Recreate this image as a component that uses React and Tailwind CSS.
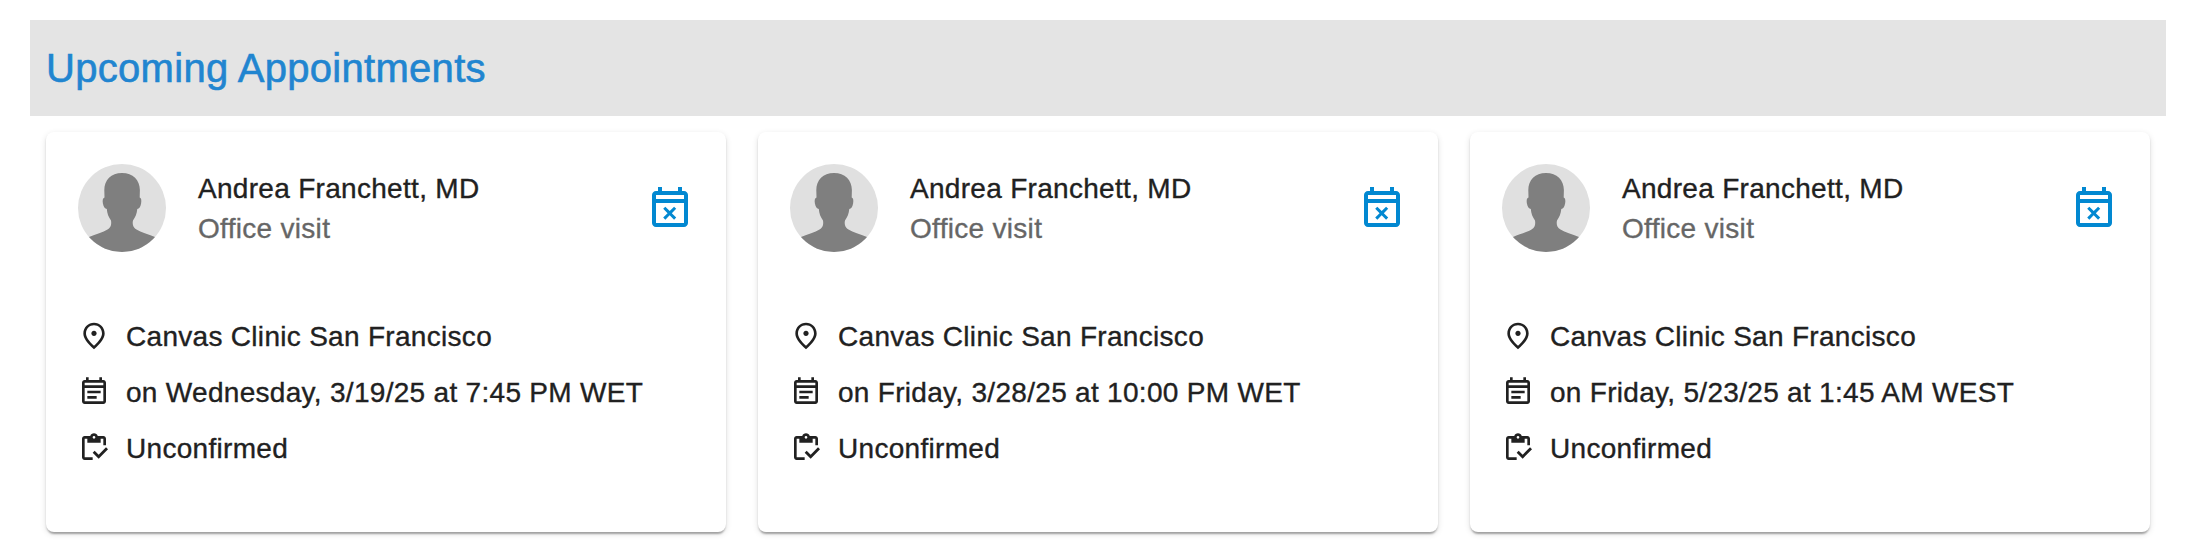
const appointments = [
  { provider: 'Andrea Franchett, MD', type: 'Office visit', place: 'Canvas Clinic San Francisco', time: 'on Wednesday, 3/19/25 at 7:45 PM WET', status: 'Unconfirmed' },
  { provider: 'Andrea Franchett, MD', type: 'Office visit', place: 'Canvas Clinic San Francisco', time: 'on Friday, 3/28/25 at 10:00 PM WET', status: 'Unconfirmed' },
  { provider: 'Andrea Franchett, MD', type: 'Office visit', place: 'Canvas Clinic San Francisco', time: 'on Friday, 5/23/25 at 1:45 AM WEST', status: 'Unconfirmed' },
];

function Icon({ className, children }) {
  return (
    <svg viewBox="0 0 24 24" fill="currentColor" className={className} aria-hidden="true">
      {children}
    </svg>
  );
}

const PlaceIcon = () => (
  <Icon className="size-8 shrink-0">
    <path d="M12 12c-1.1 0-2-.9-2-2s.9-2 2-2 2 .9 2 2-.9 2-2 2zm6-1.8C18 6.57 15.35 4 12 4s-6 2.57-6 6.2c0 2.34 1.95 5.44 6 9.14 4.05-3.7 6-6.8 6-9.14zM12 2c4.2 0 8 3.22 8 8.2 0 3.32-2.67 7.25-8 11.8-5.33-4.55-8-8.48-8-11.8C4 5.22 7.8 2 12 2z" />
  </Icon>
);

const EventNoteIcon = () => (
  <Icon className="size-8 shrink-0">
    <path d="M19 3h-1V1h-2v2H8V1H6v2H5c-1.1 0-2 .9-2 2v14c0 1.1.9 2 2 2h14c1.1 0 2-.9 2-2V5c0-1.1-.9-2-2-2zm0 16H5V9h14v10zM5 7V5h14v2H5zm2 4h10v2H7v-2zm0 4h7v2H7v-2z" />
  </Icon>
);

const InventoryIcon = () => (
  <Icon className="size-8 shrink-0">
    <path d="M5 5h2v3h10V5h2v5h2V5c0-1.1-.9-2-2-2h-4.18C14.4 1.84 13.3 1 12 1s-2.4.84-2.82 2H5c-1.1 0-2 .9-2 2v14c0 1.1.9 2 2 2h6v-2H5V5zm7-2c.55 0 1 .45 1 1s-.45 1-1 1-1-.45-1-1 .45-1 1-1z" />
    <path d="M21 11.5 15.51 17l-3.01-3-1.5 1.5 4.51 4.5 7-7z" />
  </Icon>
);

const EventBusyIcon = () => (
  <Icon className="size-12">
    <path d="M19 3h-1V1h-2v2H8V1H6v2H5c-1.1 0-2 .9-2 2v14c0 1.1.9 2 2 2h14c1.1 0 2-.9 2-2V5c0-1.1-.9-2-2-2zm0 16H5V9h14v10zM5 7V5h14v2H5z" />
    <path d="M9.66 10.85l2.19 2.19 2.19-2.19 1.06 1.06-2.19 2.19 2.19 2.19-1.06 1.06-2.19-2.19-2.19 2.19-1.06-1.06 2.19-2.19-2.19-2.19z" />
  </Icon>
);

function Avatar() {
  return (
    <svg viewBox="0 0 88 88" className="size-22 shrink-0 rounded-full bg-[#e0e0e0]" aria-hidden="true">
      <path
        fill="#7f7f7f"
        d="M44 9C33 9 26.300 16 26.300 26L26.500 33.500C24.700 34 24.400 36.500 24.900 39.500C25.500 43 27 44.600 28.800 45C29.200 49.500 30.500 53 33 56.500C33.600 60.500 33 63.500 29.500 65.500C25 68.200 18 70 11 73V88H77V73C70 70 63 68.200 58.500 65.500C55 63.500 54.200 60 55 56.500C57.500 53 58.800 49.500 59.300 45C61.200 44.600 62.500 43 63.100 39.500C63.600 36.500 63.400 34 61.700 33.500L61.900 26C61.900 16 55 9 44 9Z"
      />
    </svg>
  );
}

function Detail({ icon, children }) {
  return (
    <li className="flex items-center gap-4">
      {icon}
      <span className="pt-0.5 leading-[38px] whitespace-nowrap">{children}</span>
    </li>
  );
}

function AppointmentCard({ item }) {
  return (
    <article className="h-[400px] rounded-lg bg-white p-8 shadow-[0_4px_2px_-2px_rgba(0,0,0,0.2),0_2px_2px_0_rgba(0,0,0,0.14),0_2px_6px_0_rgba(0,0,0,0.12)]">
      <div className="flex items-center">
        <Avatar />
        <div className="ml-8 flex-1 pt-0.5 leading-10">
          <h2>{item.provider}</h2>
          <p className="text-[#666666]">{item.type}</p>
        </div>
        <button type="button" aria-label="Cancel appointment" className="pt-0.5 text-[#0288d1]">
          <EventBusyIcon />
        </button>
      </div>
      <ul className="mt-16 flex flex-col gap-4">
        <Detail icon={<PlaceIcon />}>{item.place}</Detail>
        <Detail icon={<EventNoteIcon />}>{item.time}</Detail>
        <Detail icon={<InventoryIcon />}>{item.status}</Detail>
      </ul>
    </article>
  );
}

export default function App() {
  return (
    <main className="h-[558px] overflow-hidden bg-white pt-5 pr-8 pl-[30px] font-['Liberation_Sans',Arial,sans-serif] text-[28px] tracking-[0.01071em] text-[#212121] [-webkit-text-stroke:0.35px_currentColor]">
      <header className="flex h-24 items-center bg-[#e4e4e4] px-4">
        <h1 className="text-[40px] leading-[64px] tracking-[0.0075em] text-[#2185d0] [-webkit-text-stroke:0.6px_currentColor]">Upcoming Appointments</h1>
      </header>
      <section className="grid grid-cols-3 gap-8 px-4 pt-4">
        {appointments.map((item) => (
          <AppointmentCard key={item.time} item={item} />
        ))}
      </section>
    </main>
  );
}
